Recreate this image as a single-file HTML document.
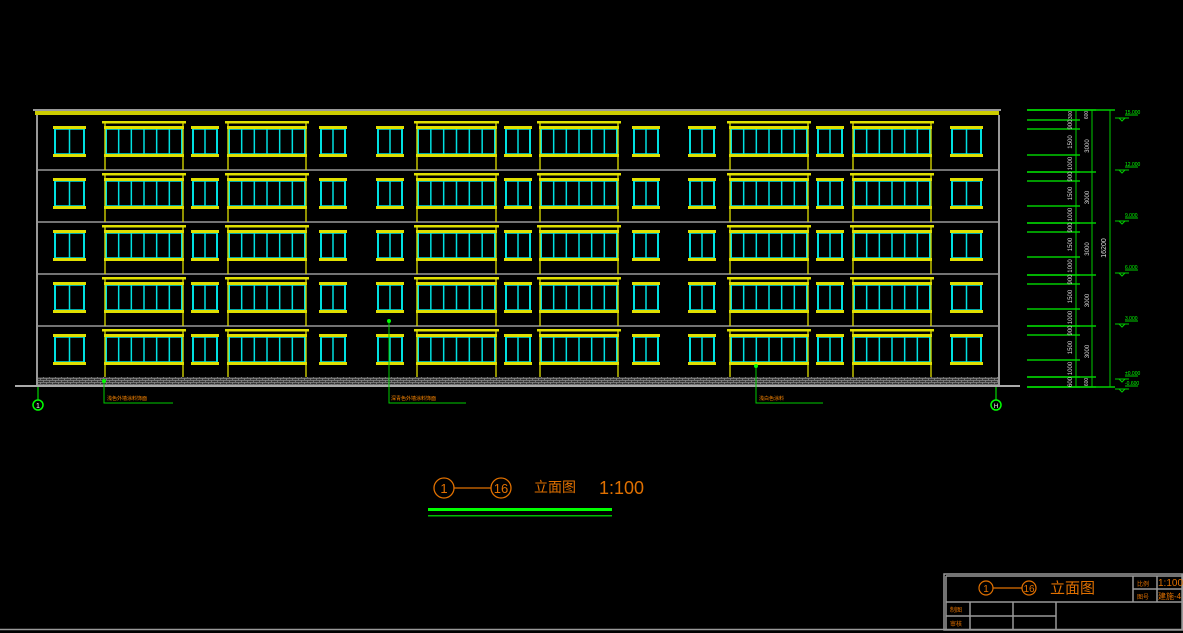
<!DOCTYPE html>
<html><head><meta charset="utf-8">
<style>
html,body{margin:0;padding:0;background:#000;width:1183px;height:633px;overflow:hidden}
svg{display:block}
text{font-family:"Liberation Sans","Noto Sans CJK SC",sans-serif}
</style></head>
<body>
<svg id="s" width="1183" height="633" viewBox="0 0 1183 633" xmlns="http://www.w3.org/2000/svg">
<defs>
<pattern id="brick" width="6" height="4" patternUnits="userSpaceOnUse">
<rect width="6" height="4" fill="#333"/>
<path d="M0 0.5H6M0 2.5H6M1.5 0V2M4.5 2V4" stroke="#888" stroke-width="0.8"/>
</pattern>
</defs>
<!-- roof -->
<rect x="33" y="109" width="968" height="2" fill="#999"/>
<rect x="35" y="111" width="964" height="4" fill="#cccc00"/>
<!-- walls -->
<line x1="37" y1="115" x2="37" y2="386" stroke="#999" stroke-width="2"/>
<line x1="999" y1="115" x2="999" y2="386" stroke="#999" stroke-width="2"/>
<rect x="38" y="377" width="960" height="8" fill="url(#brick)"/>
<line x1="15" y1="386" x2="1020" y2="386" stroke="#aaa" stroke-width="2"/>
<g id="b"></g>
<line x1="38" y1="387" x2="38" y2="400" stroke="#0f0"/>
<circle cx="38" cy="405" r="5" fill="none" stroke="#0f0" stroke-width="1.5"/>
<text x="38" y="408" font-size="7" fill="#fff" text-anchor="middle">1</text>
<line x1="996" y1="387" x2="996" y2="400" stroke="#0f0"/>
<circle cx="996" cy="405" r="5" fill="none" stroke="#0f0" stroke-width="1.5"/>
<text x="996" y="408" font-size="6" fill="#fff" text-anchor="middle">H</text>
<g stroke="#0c0" fill="none">
<path d="M104 381V403H173"/><path d="M389 321V403H466"/><path d="M756 366V403H823"/>
</g>
<g fill="#0f0"><circle cx="104" cy="381" r="2"/><circle cx="389" cy="321" r="2"/><circle cx="756" cy="366" r="2"/></g>
<g fill="#f80" font-size="5"><text x="107" y="400">浅色外墙涂料饰面</text><text x="391" y="400">深青色外墙涂料饰面</text><text x="759" y="400">浅白色涂料</text></g>
<g id="d" stroke="#0c0" fill="#0f0"></g>
<g stroke="#e07000" fill="none" stroke-width="1.3">
<circle cx="444" cy="488" r="10"/><circle cx="501" cy="488" r="10"/>
<line x1="454" y1="488" x2="491" y2="488"/>
</g>
<g fill="#e07000">
<text x="444" y="493" font-size="13" text-anchor="middle">1</text>
<text x="501" y="493" font-size="13" text-anchor="middle">16</text>
<text x="534" y="492" font-size="14">立面图</text>
<text x="599" y="494" font-size="18">1:100</text>
</g>
<rect x="428" y="508" width="184" height="3" fill="#0f0"/>
<rect x="428" y="515" width="184" height="1.5" fill="#0b0"/>
<g stroke="#999" fill="none" stroke-width="1.5">
<line x1="0" y1="629.5" x2="1183" y2="629.5"/>
<line x1="1182" y1="574" x2="1182" y2="630"/>
<rect x="944" y="574" width="239" height="56"/>
<line x1="946" y1="576" x2="1183" y2="576"/>
<line x1="946" y1="576" x2="946" y2="630"/>
<line x1="946" y1="602" x2="1183" y2="602"/>
<line x1="946" y1="616" x2="1056" y2="616"/>
<line x1="970" y1="602" x2="970" y2="630"/>
<line x1="1013" y1="602" x2="1013" y2="630"/>
<line x1="1056" y1="602" x2="1056" y2="630"/>
<line x1="1133" y1="576" x2="1133" y2="602"/>
<line x1="1157" y1="576" x2="1157" y2="602"/>
<line x1="1133" y1="589" x2="1183" y2="589"/>
</g>
<g stroke="#e07000" fill="none" stroke-width="1.2">
<circle cx="986" cy="588" r="7"/><circle cx="1029" cy="588" r="7"/>
<line x1="993" y1="588" x2="1022" y2="588"/>
</g>
<g fill="#e07000">
<text x="986" y="592" font-size="10" text-anchor="middle">1</text>
<text x="1029" y="592" font-size="10" text-anchor="middle">16</text>
<text x="1050" y="593" font-size="15">立面图</text>
<text x="1137" y="586" font-size="6">比例</text>
<text x="1137" y="599" font-size="6">图号</text>
<text x="1158" y="586" font-size="10">1:100</text>
<text x="1158" y="599" font-size="8">建施-4</text>
<text x="950" y="612" font-size="6">制图</text>
<text x="950" y="626" font-size="6">审核</text>
</g>
</svg>
<script>
var NS="http://www.w3.org/2000/svg",b=document.getElementById('b'),d=document.getElementById('d');
function el(p,t,a,txt){var e=document.createElementNS(NS,t);for(var k in a)e.setAttribute(k,a[k]);if(txt)e.textContent=txt;p.appendChild(e);return e}
function R(x,y,w,h,c){el(b,'rect',{x:x,y:y,width:w,height:h,fill:c})}
function L(x1,y1,x2,y2,c,w){el(b,'line',{x1:x1,y1:y1,x2:x2,y2:y2,stroke:c,'stroke-width':w||1})}
var tops=[117,169,221,273,325];
tops.slice(1).forEach(function(y){L(38,y+1,998,y+1,'#999',1.5)});
var small=[[53,86],[191,219],[319,347],[376,404],[504,532],[632,660],[688,716],[816,844],[950,983]];
var big=[[104,184],[227,307],[416,497],[539,619],[729,809],[852,932]];
var Y='#e0e000',C='#00e0e0';
function win(x1,x2,y,n){
  var yt=y+11,yb=y+38;
  for(var i=0;i<=n;i++){var x=x1+2+(x2-x1-4)*i/n;L(x,yt,x,yb,C,i==0||i==n?2:1.5)}
  L(x1+2,yt+1,x2-2,yt+1,C,1.5);L(x1+2,yb-1,x2-2,yb-1,C,1.5);
  R(x1,yt-2,x2-x1,3,Y);R(x1,yb-1,x2-x1,3,Y);
}
tops.forEach(function(t,f){
  small.forEach(function(s){win(s[0],s[1],t,2)});
  big.forEach(function(s){
    win(s[0],s[1],t,6);
    R(s[0]-2,t+4,s[1]-s[0]+4,2.5,Y);
    var bot=f==4?377:t+53;
    L(s[0]+1,t+6,s[0]+1,bot,Y,1.3);L(s[1]-1,t+6,s[1]-1,bot,Y,1.3);
  });
});
function DL(x1,y1,x2,y2,w){el(d,'line',{x1:x1,y1:y1,x2:x2,y2:y2,'stroke-width':w||1})}
function T(x,y,s,rot,sz){el(d,'text',{x:x,y:y,'font-size':sz||6,stroke:'none',fill:rot?'#ddd':'#0f0',transform:rot?'rotate(-90 '+x+' '+y+')':'','text-anchor':rot?'middle':'start'},s)}
DL(1076,110,1076,387);DL(1092,110,1092,387);DL(1110,110,1110,387);
var lv=[110,120,129,155,172,181,206,223,232,257,275,284,309,326,335,360,377,387];
lv.forEach(function(y){DL(1027,y,1080,y,1.5)});
[110,172,223,275,326,377,387].forEach(function(y){DL(1027,y,1096,y,1.5)});
DL(1027,110,1115,110,1.5);DL(1027,387,1115,387,1.5);
var el_=[['15.000',114],['12.000',166],['9.000',217],['6.000',269],['3.000',320],['±0.000',375],['-0.600',385]];
el_.forEach(function(e){var y=e[1];el(d,'path',{d:'M1115 '+(y+4)+'h14M1119 '+(y+4)+'l3 3l3 -3',fill:'none'});DL(1125,y+1,1138,y+1);T(1125,y,e[0],0,5)});
var segs=[[120,129,'900'],[129,155,'1500'],[155,172,'1000'],[172,181,'900'],[181,206,'1500'],[206,223,'1000'],[223,232,'900'],[232,257,'1500'],[257,275,'1000'],[275,284,'900'],[284,309,'1500'],[309,326,'1000'],[326,335,'900'],[335,360,'1500'],[360,377,'1000'],[377,387,'600']];
segs.forEach(function(s){T(1072,(s[0]+s[1])/2,s[2],1,6)});
T(1072,115,'300',1,5);T(1088,115,'600',1,5);T(1088,382,'600',1,5);
[[120,172],[172,223],[223,275],[275,326],[326,377]].forEach(function(s){T(1089,(s[0]+s[1])/2,'3000',1,6)});
T(1106,248,'16200',1,7);
</script>
</body></html>
